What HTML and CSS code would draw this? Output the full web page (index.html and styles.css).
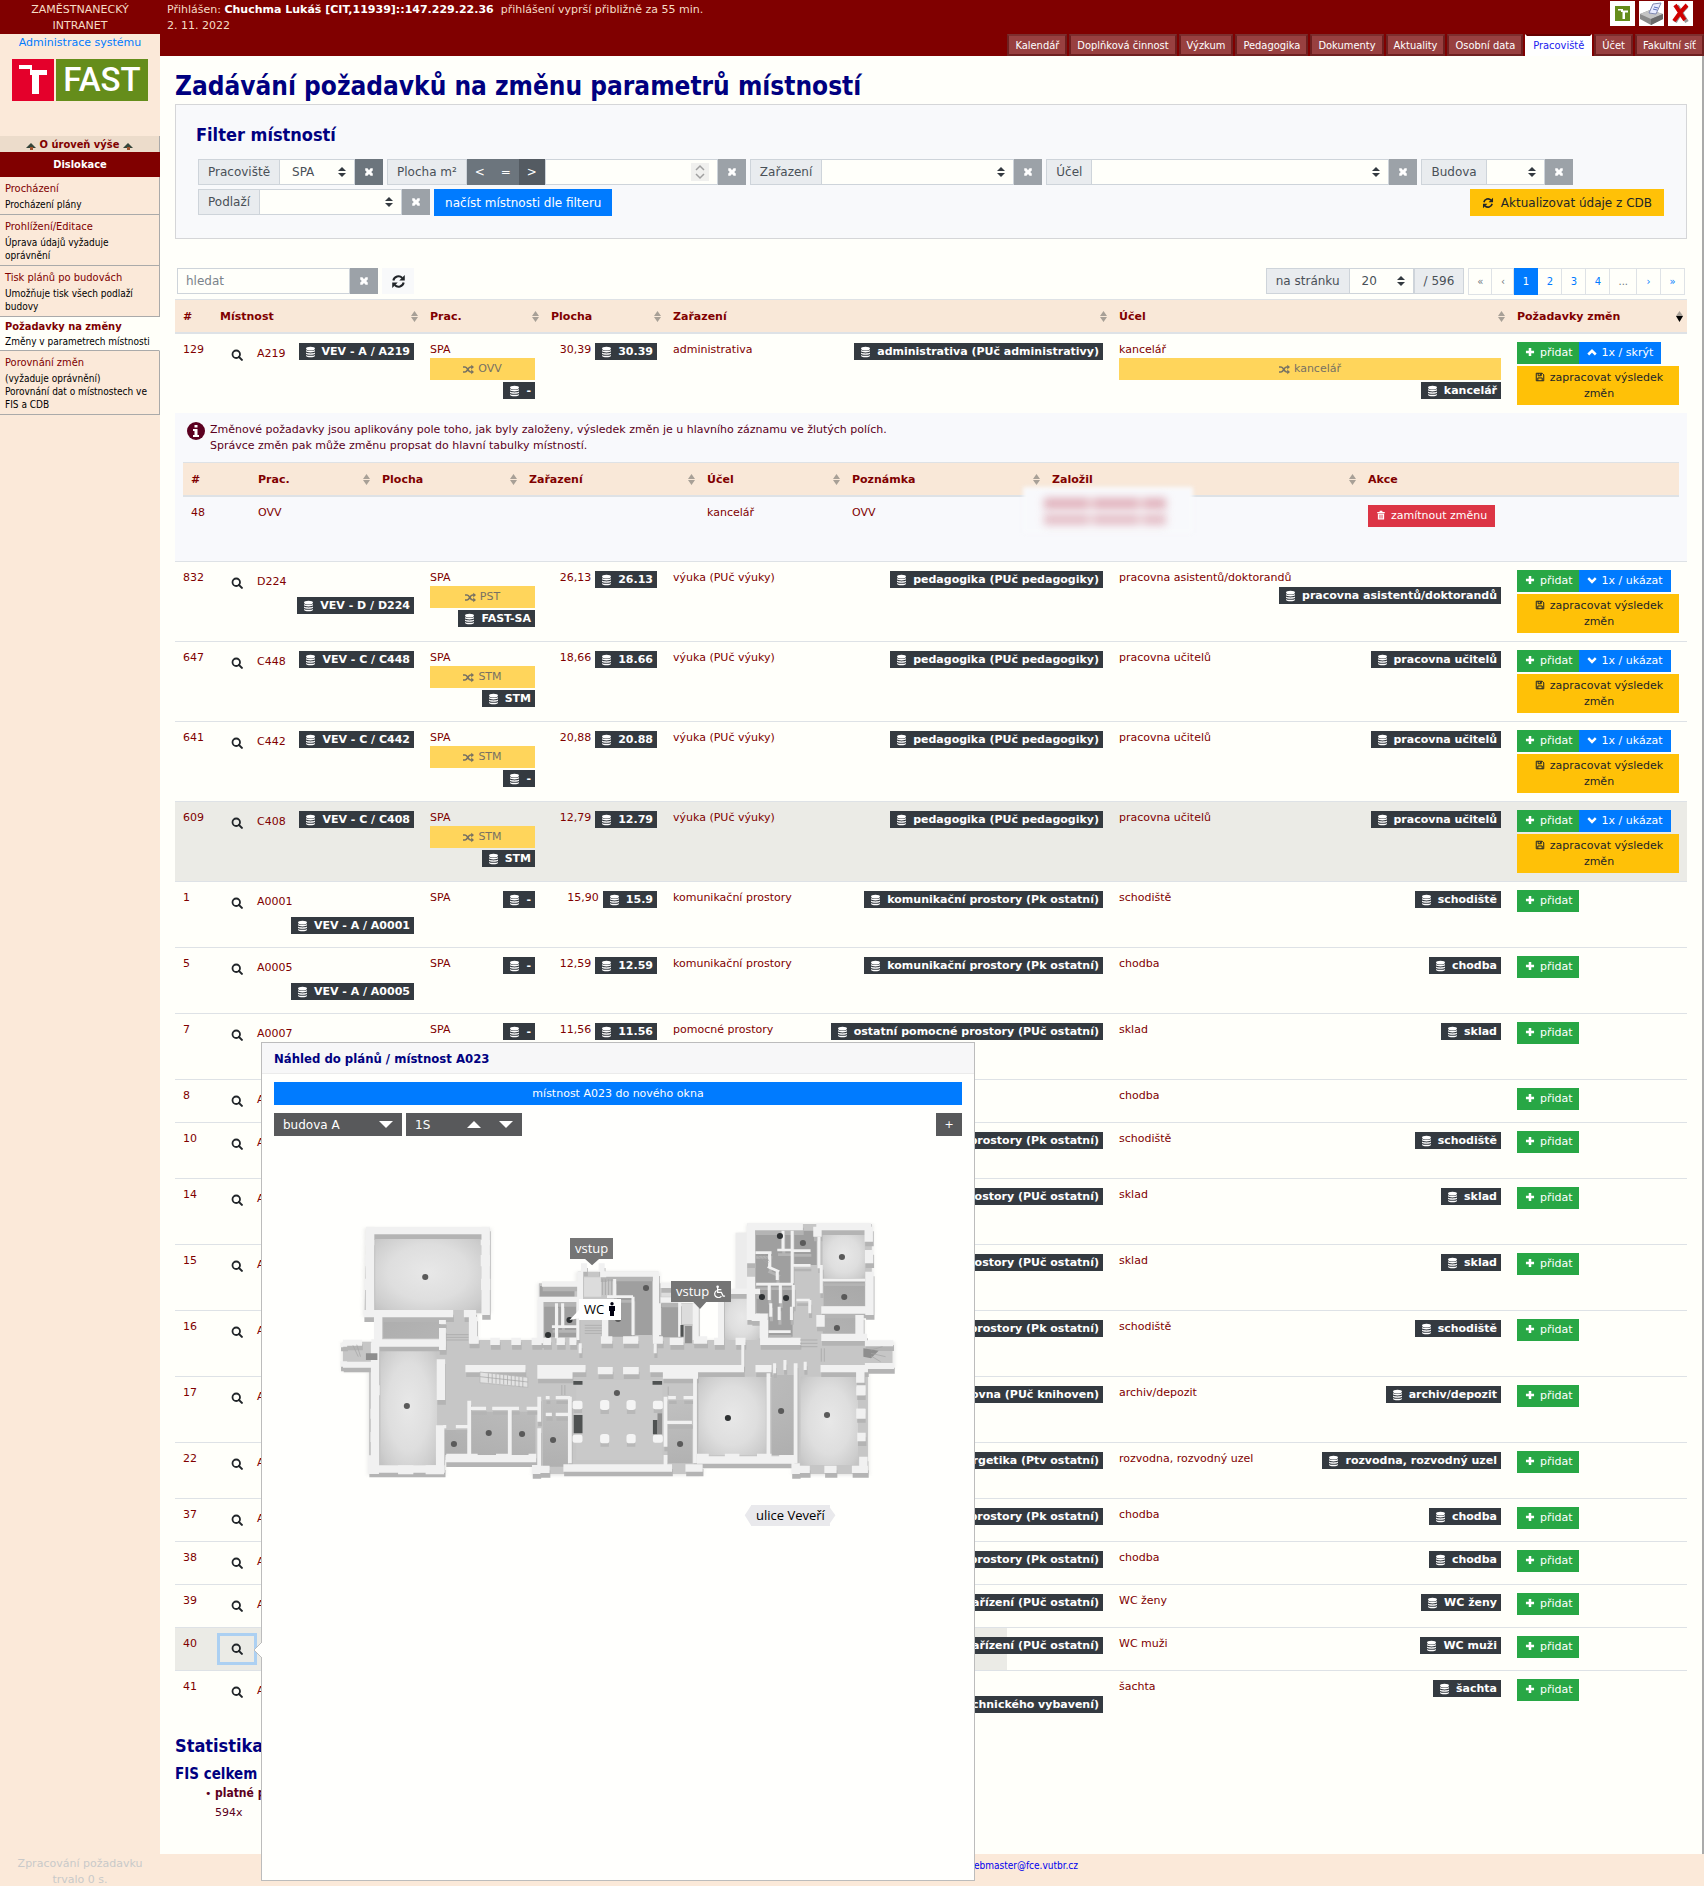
FILE: index.html
```html
<!DOCTYPE html>
<html lang="cs">
<head>
<meta charset="utf-8">
<title>Zadávání požadavků na změnu parametrů místností</title>
<link rel="stylesheet" href="styles.css">
</head>
<body>
<svg class="sprite" aria-hidden="true">
  <symbol id="i-times" viewBox="0 0 16 16"><path d="M2 2h3.500L8 5l2.500-3H14v3.500L11.500 8l2.500 2.500V14h-3.500L8 11l-2.500 3H2v-3.500L4.500 8 2 5.500z" fill="currentColor"/></symbol>
  <symbol id="i-refresh" viewBox="0 0 16 16"><path d="M2.500 7A5.600 5.600 0 0 1 12 4.200M13.500 9A5.600 5.600 0 0 1 4 11.800" fill="none" stroke="currentColor" stroke-width="2.200"/><path d="M14.700 1v6H8.800zM1.300 15V9h5.900z" fill="currentColor"/></symbol>
  <symbol id="i-search" viewBox="0 0 16 16"><circle cx="7" cy="7" r="5" fill="none" stroke="currentColor" stroke-width="2.400"/><path d="M10.500 10.500l4 4" stroke="currentColor" stroke-width="2.800" stroke-linecap="round"/></symbol>
  <symbol id="i-db" viewBox="0 0 16 16"><g fill="currentColor"><ellipse cx="8" cy="3" rx="6.500" ry="2.800"/><path d="M1.500 5.200c2 1.800 11 1.800 13 0v1.800c-1 2.200-12 2.200-13 0zM1.500 8.700c2 1.800 11 1.800 13 0v1.800c-1 2.200-12 2.200-13 0zM1.500 12.200c2 1.800 11 1.800 13 0v1.500c-1 2.600-12 2.600-13 0z"/></g></symbol>
  <symbol id="i-random" viewBox="0 0 16 16"><path d="M0 4.500h3c4 0 4 7 8 7h2M0 11.500h3c4 0 4-7 8-7h2" fill="none" stroke="currentColor" stroke-width="2.200"/><path d="M12 1l4 3.500-4 3.500zM12 8l4 3.500-4 3.500z" fill="currentColor"/></symbol>
  <symbol id="i-plus" viewBox="0 0 16 16"><path d="M6 1.500h4V6h4.500v4H10v4.500H6V10H1.500V6H6z" fill="currentColor"/></symbol>
  <symbol id="i-up" viewBox="0 0 16 16"><path d="M2 12l6-6 6 6" fill="none" stroke="currentColor" stroke-width="4"/></symbol>
  <symbol id="i-down" viewBox="0 0 16 16"><path d="M2 5l6 6 6-6" fill="none" stroke="currentColor" stroke-width="4"/></symbol>
  <symbol id="i-save" viewBox="0 0 16 16"><path d="M2 2h9.500L14 4.500V14H2zM4.500 14V9.500h7V14M5 2v4h5V2M8.500 3v2" fill="none" stroke="currentColor" stroke-width="1.600"/></symbol>
  <symbol id="i-trash" viewBox="0 0 16 16"><path d="M2 3h3.500L6 1h4l.5 2H14v2H2zM3 6h10v9H3z" fill="currentColor"/><path d="M6 7.500v6M8 7.500v6M10 7.500v6" stroke="#dc3545" stroke-width="1"/></symbol>
  <symbol id="i-info" viewBox="0 0 18 18"><circle cx="9" cy="9" r="9" fill="currentColor"/><path d="M7.500 3h3v2.600h-3zM6 7h4.500v6H12v2H6v-2h1.500V9H6z" fill="#fff"/></symbol>
  <symbol id="i-sort" viewBox="0 0 7 11"><path d="M3.500 0L7 5H0zM3.500 11L7 6H0z" fill="#a8a097"/></symbol>
  <symbol id="i-sort-desc" viewBox="0 0 7 11"><path d="M3.500 0L7 5H0z" fill="#a8a097"/><path d="M3.500 11L7 5H0z" fill="#000"/></symbol>
  <symbol id="i-tree" viewBox="0 0 10 8"><path d="M5 1l5 5H0z" fill="#34453a"/><path d="M4 5h3v3H4z" fill="#a0522d"/></symbol>
</svg>

<div class="page">
  <aside class="side">
    <div class="side-head">ZAMĚSTNANECKÝ<br>INTRANET</div>
    <a class="side-admin" href="#">Administrace systému</a>
    <a class="logo" href="#" aria-label="FAST">
      <svg class="logo-t" viewBox="0 0 42 42"><path fill="#e4002b" d="M0 0h42v42H0z"/><path fill="#fff" d="M7 6h13v4H7zM20 11h15v5h-8v19h-7V16h-2v-6h2z"/></svg>
      <span class="logo-text">FAST</span>
    </a>
    <nav class="menu">
      <a class="menu-up" href="#"><svg class="tree"><use href="#i-tree"/></svg> O úroveň výše <svg class="tree"><use href="#i-tree"/></svg></a>
      <div class="menu-title">Dislokace</div>
      <a class="item" href="#"><span class="item-name">Procházení</span><span class="item-desc">Procházení plány</span></a>
      <a class="item" href="#"><span class="item-name">Prohlížení/Editace</span><span class="item-desc">Úprava údajů vyžaduje<br>oprávnění</span></a>
      <a class="item" href="#"><span class="item-name">Tisk plánů po budovách</span><span class="item-desc">Umožňuje tisk všech podlaží budovy</span></a>
      <a class="item item-on" href="#"><span class="item-name">Požadavky na změny</span><span class="item-desc">Změny v parametrech místnosti</span></a>
      <a class="item" href="#"><span class="item-name">Porovnání změn</span><span class="item-desc">(vyžaduje oprávnění)<br>Porovnání dat o místnostech ve FIS a CDB</span></a>
    </nav>
    <div class="side-foot">Zpracování požadavku trvalo 0 s.</div>
  </aside>

  <div class="col">
    <header class="top">
      <div class="top-row">
        <div>Přihlášen: <b>Chuchma Lukáš [CIT,11939]::147.229.22.36</b>&nbsp; přihlášení vyprší přibližně za 55 min.<br>2. 11. 2022</div>
        <div class="tools">
          <a href="#" class="tool" aria-label="Intranet"><svg viewBox="0 0 25 25"><path fill="#658d1b" d="M5 5h15v15H5z"/><path fill="#fff" d="M8 8h5v1.500h5v2h-3V18h-2.500v-7H11V9.500H8z"/></svg></a>
          <a href="#" class="tool" aria-label="Tisk"><svg viewBox="0 0 25 25"><path fill="#8a8a8a" d="M1 13l10-4 13 4v5l-12 6L1 18z"/><path fill="#c4c4c4" d="M1 13l10-4 13 4-12 5z"/><path fill="#e8ecff" stroke="#8088b0" d="M10 12l4-9 8-1-5 11z"/><path stroke="#5870c0" d="M15 6l4 1M14 8l4 1"/><path fill="#6a6a6a" d="M12 18l12-5v5l-12 6z"/></svg></a>
          <a href="#" class="tool" aria-label="Odhlásit"><svg viewBox="0 0 25 25"><path d="M9 5c3 4 6 10 10 16M19 5C15 9 10 15 7 21" fill="none" stroke="#999" stroke-width="4"/><path d="M7 4c3 4 6 10 10 15M19 4C14 9 10 14 6 20" fill="none" stroke="#d00000" stroke-width="4"/></svg></a>
        </div>
      </div>
      <nav class="tabs">
        <a class="tab" href="#">Kalendář</a><a class="tab" href="#">Doplňková činnost</a><a class="tab" href="#">Výzkum</a><a class="tab" href="#">Pedagogika</a><a class="tab" href="#">Dokumenty</a><a class="tab" href="#">Aktuality</a><a class="tab" href="#">Osobní data</a><a class="tab tab-on" href="#">Pracoviště</a><a class="tab" href="#">Účet</a><a class="tab" href="#">Fakultní síť</a>
      </nav>
    </header>

    <main class="main">
      <h1>Zadávání požadavků na změnu parametrů místností</h1>

      <section class="card">
        <h2 class="card-title">Filter místností</h2>
        <form class="filters">
          <div class="group"><label class="addon" for="f1">Pracoviště</label><select class="sel w-75" id="f1"><option>SPA</option></select><button type="button" class="clr clr-on" aria-label="Zrušit"><svg><use href="#i-times"/></svg></button></div>
          <div class="group"><label class="addon" for="f2">Plocha m²</label><button type="button" class="op">&lt;</button><button type="button" class="op">=</button><button type="button" class="op op-on">&gt;</button><span class="num"><input id="f2" type="number" class="inp"><svg class="spin" viewBox="0 0 18 18"><path d="M5 7l4-4 4 4M5 11l4 4 4-4" fill="none" stroke="#a0a0a0" stroke-width="1.500"/></svg></span><button type="button" class="clr" aria-label="Zrušit"><svg><use href="#i-times"/></svg></button></div>
          <div class="group"><label class="addon" for="f3">Zařazení</label><select class="sel w-192" id="f3"><option></option></select><button type="button" class="clr" aria-label="Zrušit"><svg><use href="#i-times"/></svg></button></div>
          <div class="group"><label class="addon" for="f4">Účel</label><select class="sel w-297" id="f4"><option></option></select><button type="button" class="clr" aria-label="Zrušit"><svg><use href="#i-times"/></svg></button></div>
          <div class="group"><label class="addon" for="f5">Budova</label><select class="sel w-58" id="f5"><option></option></select><button type="button" class="clr" aria-label="Zrušit"><svg><use href="#i-times"/></svg></button></div>
          <div class="group"><label class="addon" for="f6">Podlaží</label><select class="sel w-142" id="f6"><option></option></select><button type="button" class="clr" aria-label="Zrušit"><svg><use href="#i-times"/></svg></button></div>
          <button type="button" class="btn btn-load">načíst místnosti dle filteru</button>
          <button type="button" class="btn btn-cdb"><svg><use href="#i-refresh"/></svg>Aktualizovat údaje z CDB</button>
        </form>
      </section>

      <div class="bar">
        <div class="group"><input class="inp search" type="text" placeholder="hledat" aria-label="hledat"><button type="button" class="clr" aria-label="Zrušit"><svg><use href="#i-times"/></svg></button></div>
        <button type="button" class="reload" aria-label="Obnovit"><svg><use href="#i-refresh"/></svg></button>
        <div class="group per"><label class="addon" for="per">na stránku</label><select class="sel w-64" id="per"><option>20</option></select><span class="addon">/ 596</span></div>
        <nav class="pager"><a class="off" href="#">«</a><a class="off" href="#">‹</a><a class="on" href="#">1</a><a href="#">2</a><a href="#">3</a><a href="#">4</a><a class="off" href="#">...</a><a href="#">›</a><a href="#">»</a></nav>
      </div>

      <table class="grid">
        <colgroup><col class="c-id"><col class="c-room"><col class="c-dept"><col class="c-area"><col><col class="c-use"><col class="c-act"></colgroup>
        <thead><tr>
          <th>#</th>
          <th><span class="th">Místnost<svg class="sort"><use href="#i-sort"/></svg></span></th>
          <th><span class="th">Prac.<svg class="sort"><use href="#i-sort"/></svg></span></th>
          <th><span class="th">Plocha<svg class="sort"><use href="#i-sort"/></svg></span></th>
          <th><span class="th">Zařazení<svg class="sort"><use href="#i-sort"/></svg></span></th>
          <th><span class="th">Účel<svg class="sort"><use href="#i-sort"/></svg></span></th>
          <th><span class="th">Požadavky změn<svg class="sort"><use href="#i-sort-desc"/></svg></span></th>
        </tr></thead>
        <tbody>
        <tr>
          <td>129</td>
          <td><div class="room"><button class="look" aria-label="Náhled"><svg><use href="#i-search"/></svg></button><span class="name">A219</span><span class="tag"><svg><use href="#i-db"/></svg>VEV - A / A219</span></div></td>
          <td><div class="pair">SPA<span class="chg"><svg><use href="#i-random"/></svg>OVV</span><span class="tag"><svg><use href="#i-db"/></svg>-</span></div></td>
          <td><div class="area">30,39<span class="tag"><svg><use href="#i-db"/></svg>30.39</span></div></td>
          <td><div class="pair">administrativa<span class="tag"><svg><use href="#i-db"/></svg>administrativa (PUč administrativy)</span></div></td>
          <td><div class="pair">kancelář<span class="chg"><svg><use href="#i-random"/></svg>kancelář</span><span class="tag"><svg><use href="#i-db"/></svg>kancelář</span></div></td>
          <td><div class="acts"><button class="act add"><svg><use href="#i-plus"/></svg>přidat</button><button class="act show"><svg><use href="#i-up"/></svg>1x / skrýt</button><button class="act apply"><svg><use href="#i-save"/></svg>zapracovat výsledek změn</button></div></td>
        </tr>
        <tr class="detail"><td colspan="7">
          <div class="note"><svg><use href="#i-info"/></svg><p>Změnové požadavky jsou aplikovány pole toho, jak byly založeny, výsledek změn je u hlavního záznamu ve žlutých polích.<br>Správce změn pak může změnu propsat do hlavní tabulky místností.</p></div>
          <table class="grid inner">
            <colgroup><col class="n-id"><col class="n-dept"><col class="n-area"><col class="n-cls"><col class="n-use"><col class="n-note"><col class="n-by"><col></colgroup>
            <thead><tr>
              <th>#</th>
              <th><span class="th">Prac.<svg class="sort"><use href="#i-sort"/></svg></span></th>
              <th><span class="th">Plocha<svg class="sort"><use href="#i-sort"/></svg></span></th>
              <th><span class="th">Zařazení<svg class="sort"><use href="#i-sort"/></svg></span></th>
              <th><span class="th">Účel<svg class="sort"><use href="#i-sort"/></svg></span></th>
              <th><span class="th">Poznámka<svg class="sort"><use href="#i-sort"/></svg></span></th>
              <th><span class="th">Založil<svg class="sort"><use href="#i-sort"/></svg></span></th>
              <th>Akce</th>
            </tr></thead>
            <tbody><tr><td>48</td><td>OVV</td><td></td><td></td><td>kancelář</td><td>OVV</td><td><div class="redact"><i></i><i></i></div></td><td><button class="act reject"><svg><use href="#i-trash"/></svg>zamítnout změnu</button></td></tr></tbody>
          </table>
        </td></tr>
        <tr>
          <td>832</td>
          <td><div class="room"><button class="look" aria-label="Náhled"><svg><use href="#i-search"/></svg></button><span class="name">D224</span><span class="tag brk"><svg><use href="#i-db"/></svg>VEV - D / D224</span></div></td>
          <td><div class="pair">SPA<span class="chg"><svg><use href="#i-random"/></svg>PST</span><span class="tag"><svg><use href="#i-db"/></svg>FAST-SA</span></div></td>
          <td><div class="area">26,13<span class="tag"><svg><use href="#i-db"/></svg>26.13</span></div></td>
          <td><div class="pair">výuka (PUč výuky)<span class="tag"><svg><use href="#i-db"/></svg>pedagogika (PUč pedagogiky)</span></div></td>
          <td><div class="pair">pracovna asistentů/doktorandů<span class="tag"><svg><use href="#i-db"/></svg>pracovna asistentů/doktorandů</span></div></td>
          <td><div class="acts"><button class="act add"><svg><use href="#i-plus"/></svg>přidat</button><button class="act show"><svg><use href="#i-down"/></svg>1x / ukázat</button><button class="act apply"><svg><use href="#i-save"/></svg>zapracovat výsledek změn</button></div></td>
        </tr>
        <tr>
          <td>647</td>
          <td><div class="room"><button class="look" aria-label="Náhled"><svg><use href="#i-search"/></svg></button><span class="name">C448</span><span class="tag"><svg><use href="#i-db"/></svg>VEV - C / C448</span></div></td>
          <td><div class="pair">SPA<span class="chg"><svg><use href="#i-random"/></svg>STM</span><span class="tag"><svg><use href="#i-db"/></svg>STM</span></div></td>
          <td><div class="area">18,66<span class="tag"><svg><use href="#i-db"/></svg>18.66</span></div></td>
          <td><div class="pair">výuka (PUč výuky)<span class="tag"><svg><use href="#i-db"/></svg>pedagogika (PUč pedagogiky)</span></div></td>
          <td><div class="pair">pracovna učitelů<span class="tag"><svg><use href="#i-db"/></svg>pracovna učitelů</span></div></td>
          <td><div class="acts"><button class="act add"><svg><use href="#i-plus"/></svg>přidat</button><button class="act show"><svg><use href="#i-down"/></svg>1x / ukázat</button><button class="act apply"><svg><use href="#i-save"/></svg>zapracovat výsledek změn</button></div></td>
        </tr>
        <tr>
          <td>641</td>
          <td><div class="room"><button class="look" aria-label="Náhled"><svg><use href="#i-search"/></svg></button><span class="name">C442</span><span class="tag"><svg><use href="#i-db"/></svg>VEV - C / C442</span></div></td>
          <td><div class="pair">SPA<span class="chg"><svg><use href="#i-random"/></svg>STM</span><span class="tag"><svg><use href="#i-db"/></svg>-</span></div></td>
          <td><div class="area">20,88<span class="tag"><svg><use href="#i-db"/></svg>20.88</span></div></td>
          <td><div class="pair">výuka (PUč výuky)<span class="tag"><svg><use href="#i-db"/></svg>pedagogika (PUč pedagogiky)</span></div></td>
          <td><div class="pair">pracovna učitelů<span class="tag"><svg><use href="#i-db"/></svg>pracovna učitelů</span></div></td>
          <td><div class="acts"><button class="act add"><svg><use href="#i-plus"/></svg>přidat</button><button class="act show"><svg><use href="#i-down"/></svg>1x / ukázat</button><button class="act apply"><svg><use href="#i-save"/></svg>zapracovat výsledek změn</button></div></td>
        </tr>
        <tr class="shade">
          <td>609</td>
          <td><div class="room"><button class="look" aria-label="Náhled"><svg><use href="#i-search"/></svg></button><span class="name">C408</span><span class="tag"><svg><use href="#i-db"/></svg>VEV - C / C408</span></div></td>
          <td><div class="pair">SPA<span class="chg"><svg><use href="#i-random"/></svg>STM</span><span class="tag"><svg><use href="#i-db"/></svg>STM</span></div></td>
          <td><div class="area">12,79<span class="tag"><svg><use href="#i-db"/></svg>12.79</span></div></td>
          <td><div class="pair">výuka (PUč výuky)<span class="tag"><svg><use href="#i-db"/></svg>pedagogika (PUč pedagogiky)</span></div></td>
          <td><div class="pair">pracovna učitelů<span class="tag"><svg><use href="#i-db"/></svg>pracovna učitelů</span></div></td>
          <td><div class="acts"><button class="act add"><svg><use href="#i-plus"/></svg>přidat</button><button class="act show"><svg><use href="#i-down"/></svg>1x / ukázat</button><button class="act apply"><svg><use href="#i-save"/></svg>zapracovat výsledek změn</button></div></td>
        </tr>
        <tr class="lg">
          <td>1</td>
          <td><div class="room"><button class="look" aria-label="Náhled"><svg><use href="#i-search"/></svg></button><span class="name">A0001</span><span class="tag brk"><svg><use href="#i-db"/></svg>VEV - A / A0001</span></div></td>
          <td><div class="pair">SPA<span class="tag"><svg><use href="#i-db"/></svg>-</span></div></td>
          <td><div class="area">15,90<span class="tag"><svg><use href="#i-db"/></svg>15.9</span></div></td>
          <td><div class="pair">komunikační prostory<span class="tag"><svg><use href="#i-db"/></svg>komunikační prostory (Pk ostatní)</span></div></td>
          <td><div class="pair">schodiště<span class="tag"><svg><use href="#i-db"/></svg>schodiště</span></div></td>
          <td><div class="acts"><button class="act add"><svg><use href="#i-plus"/></svg>přidat</button></div></td>
        </tr>
        <tr class="lg">
          <td>5</td>
          <td><div class="room"><button class="look" aria-label="Náhled"><svg><use href="#i-search"/></svg></button><span class="name">A0005</span><span class="tag brk"><svg><use href="#i-db"/></svg>VEV - A / A0005</span></div></td>
          <td><div class="pair">SPA<span class="tag"><svg><use href="#i-db"/></svg>-</span></div></td>
          <td><div class="area">12,59<span class="tag"><svg><use href="#i-db"/></svg>12.59</span></div></td>
          <td><div class="pair">komunikační prostory<span class="tag"><svg><use href="#i-db"/></svg>komunikační prostory (Pk ostatní)</span></div></td>
          <td><div class="pair">chodba<span class="tag"><svg><use href="#i-db"/></svg>chodba</span></div></td>
          <td><div class="acts"><button class="act add"><svg><use href="#i-plus"/></svg>přidat</button></div></td>
        </tr>
        <tr class="lg">
          <td>7</td>
          <td><div class="room"><button class="look" aria-label="Náhled"><svg><use href="#i-search"/></svg></button><span class="name">A0007</span></div></td>
          <td><div class="pair">SPA<span class="tag"><svg><use href="#i-db"/></svg>-</span></div></td>
          <td><div class="area">11,56<span class="tag"><svg><use href="#i-db"/></svg>11.56</span></div></td>
          <td><div class="pair">pomocné prostory<span class="tag"><svg><use href="#i-db"/></svg>ostatní pomocné prostory (PUč ostatní)</span></div></td>
          <td><div class="pair">sklad<span class="tag"><svg><use href="#i-db"/></svg>sklad</span></div></td>
          <td><div class="acts"><button class="act add"><svg><use href="#i-plus"/></svg>přidat</button></div></td>
        </tr>
        <tr>
          <td>8</td>
          <td><div class="room"><button class="look" aria-label="Náhled"><svg><use href="#i-search"/></svg></button><span class="name">A</span></div></td>
          <td></td><td></td><td></td>
          <td>chodba</td>
          <td><div class="acts"><button class="act add"><svg><use href="#i-plus"/></svg>přidat</button></div></td>
        </tr>
        <tr class="md">
          <td>10</td>
          <td><div class="room"><button class="look" aria-label="Náhled"><svg><use href="#i-search"/></svg></button><span class="name">A</span></div></td>
          <td></td><td></td>
          <td><div class="pair"><span class="tag">prostory (Pk ostatní)</span></div></td>
          <td><div class="pair">schodiště<span class="tag"><svg><use href="#i-db"/></svg>schodiště</span></div></td>
          <td><div class="acts"><button class="act add"><svg><use href="#i-plus"/></svg>přidat</button></div></td>
        </tr>
        <tr class="lg">
          <td>14</td>
          <td><div class="room"><button class="look" aria-label="Náhled"><svg><use href="#i-search"/></svg></button><span class="name">A</span></div></td>
          <td></td><td></td>
          <td><div class="pair"><span class="tag">prostory (PUč ostatní)</span></div></td>
          <td><div class="pair">sklad<span class="tag"><svg><use href="#i-db"/></svg>sklad</span></div></td>
          <td><div class="acts"><button class="act add"><svg><use href="#i-plus"/></svg>přidat</button></div></td>
        </tr>
        <tr class="lg">
          <td>15</td>
          <td><div class="room"><button class="look" aria-label="Náhled"><svg><use href="#i-search"/></svg></button><span class="name">A</span></div></td>
          <td></td><td></td>
          <td><div class="pair"><span class="tag">prostory (PUč ostatní)</span></div></td>
          <td><div class="pair">sklad<span class="tag"><svg><use href="#i-db"/></svg>sklad</span></div></td>
          <td><div class="acts"><button class="act add"><svg><use href="#i-plus"/></svg>přidat</button></div></td>
        </tr>
        <tr class="lg">
          <td>16</td>
          <td><div class="room"><button class="look" aria-label="Náhled"><svg><use href="#i-search"/></svg></button><span class="name">A</span></div></td>
          <td></td><td></td>
          <td><div class="pair"><span class="tag">prostory (Pk ostatní)</span></div></td>
          <td><div class="pair">schodiště<span class="tag"><svg><use href="#i-db"/></svg>schodiště</span></div></td>
          <td><div class="acts"><button class="act add"><svg><use href="#i-plus"/></svg>přidat</button></div></td>
        </tr>
        <tr class="lg">
          <td>17</td>
          <td><div class="room"><button class="look" aria-label="Náhled"><svg><use href="#i-search"/></svg></button><span class="name">A</span></div></td>
          <td></td><td></td>
          <td><div class="pair"><span class="tag">knihovna (PUč knihoven)</span></div></td>
          <td><div class="pair">archiv/depozit<span class="tag"><svg><use href="#i-db"/></svg>archiv/depozit</span></div></td>
          <td><div class="acts"><button class="act add"><svg><use href="#i-plus"/></svg>přidat</button></div></td>
        </tr>
        <tr class="md">
          <td>22</td>
          <td><div class="room"><button class="look" aria-label="Náhled"><svg><use href="#i-search"/></svg></button><span class="name">A</span></div></td>
          <td></td><td></td>
          <td><div class="pair"><span class="tag">energetika (Ptv ostatní)</span></div></td>
          <td><div class="pair">rozvodna, rozvodný uzel<span class="tag"><svg><use href="#i-db"/></svg>rozvodna, rozvodný uzel</span></div></td>
          <td><div class="acts"><button class="act add"><svg><use href="#i-plus"/></svg>přidat</button></div></td>
        </tr>
        <tr>
          <td>37</td>
          <td><div class="room"><button class="look" aria-label="Náhled"><svg><use href="#i-search"/></svg></button><span class="name">A</span></div></td>
          <td></td><td></td>
          <td><div class="pair"><span class="tag">prostory (Pk ostatní)</span></div></td>
          <td><div class="pair">chodba<span class="tag"><svg><use href="#i-db"/></svg>chodba</span></div></td>
          <td><div class="acts"><button class="act add"><svg><use href="#i-plus"/></svg>přidat</button></div></td>
        </tr>
        <tr>
          <td>38</td>
          <td><div class="room"><button class="look" aria-label="Náhled"><svg><use href="#i-search"/></svg></button><span class="name">A</span></div></td>
          <td></td><td></td>
          <td><div class="pair"><span class="tag">prostory (Pk ostatní)</span></div></td>
          <td><div class="pair">chodba<span class="tag"><svg><use href="#i-db"/></svg>chodba</span></div></td>
          <td><div class="acts"><button class="act add"><svg><use href="#i-plus"/></svg>přidat</button></div></td>
        </tr>
        <tr>
          <td>39</td>
          <td><div class="room"><button class="look" aria-label="Náhled"><svg><use href="#i-search"/></svg></button><span class="name">A</span></div></td>
          <td></td><td></td>
          <td><div class="pair"><span class="tag">zařízení (PUč ostatní)</span></div></td>
          <td><div class="pair">WC ženy<span class="tag"><svg><use href="#i-db"/></svg>WC ženy</span></div></td>
          <td><div class="acts"><button class="act add"><svg><use href="#i-plus"/></svg>přidat</button></div></td>
        </tr>
        <tr class="part">
          <td>40</td>
          <td><div class="room"><button class="look look-on" aria-label="Náhled"><svg><use href="#i-search"/></svg></button></div></td>
          <td></td><td></td>
          <td><div class="pair"><span class="tag">zařízení (PUč ostatní)</span></div></td>
          <td><div class="pair">WC muži<span class="tag"><svg><use href="#i-db"/></svg>WC muži</span></div></td>
          <td><div class="acts"><button class="act add"><svg><use href="#i-plus"/></svg>přidat</button></div></td>
        </tr>
        <tr>
          <td>41</td>
          <td><div class="room"><button class="look" aria-label="Náhled"><svg><use href="#i-search"/></svg></button><span class="name">A</span></div></td>
          <td></td><td></td>
          <td><div class="pair second"><span class="tag">technického vybavení)</span></div></td>
          <td><div class="pair">šachta<span class="tag"><svg><use href="#i-db"/></svg>šachta</span></div></td>
          <td><div class="acts"><button class="act add"><svg><use href="#i-plus"/></svg>přidat</button></div></td>
        </tr>
        </tbody>
      </table>

      <section class="stats">
        <h2>Statistika</h2>
        <h3>FIS celkem</h3>
        <ul><li><b>platné p</b><br>594x</li></ul>
      </section>
    </main>
    <footer class="foot"><a href="#">webmaster@fce.vutbr.cz</a></footer>
  </div>

  <div class="pop" role="dialog" aria-label="Náhled do plánů">
    <svg class="pop-arrow" viewBox="0 0 9 16"><path d="M9 0L1 8l8 8" fill="#fffffd" stroke="#bcbcbc"/></svg>
    <h3 class="pop-title">Náhled do plánů / místnost A023</h3>
    <div class="pop-body">
      <button class="pop-open">místnost A023 do nového okna</button>
      <div class="pop-bar">
        <select class="dark w-128" aria-label="budova"><option>budova A</option></select>
        <div class="floor"><select class="dark w-116" aria-label="podlaží"><option>1S</option></select><button class="floor-up" aria-label="nahoru"></button></div>
        <button class="zoom">+</button>
      </div>
      <div class="map">
        <svg class="plan" viewBox="0 0 1568 1020" preserveAspectRatio="none" aria-hidden="true">
          <defs>
            <radialGradient id="g1" r=".75"><stop offset="0" stop-color="#e8e8e8"/><stop offset=".5" stop-color="#dedede"/><stop offset=".8" stop-color="#cdcdcd"/><stop offset="1" stop-color="#bdbdbd"/></radialGradient>
            <radialGradient id="g2" r=".75"><stop offset="0" stop-color="#c8c8c8"/><stop offset="1" stop-color="#a6a6a6"/></radialGradient>
            <filter id="soft" x="-5%" y="-5%" width="110%" height="110%"><feGaussianBlur stdDeviation="5"/></filter>
            <g id="walls">
              <path stroke-width="22" d="M130 92H436M131 80V345M433 80V345M114 341H348M376 341H408M152 352V420M400 350V430M134 429H328M144 429V810M127 807H326M314 676V807M316 478V600"/>
              <path stroke-width="18" d="M320 360V372M320 384V450M60 428H110M60 494H150M1424 430H1498M1424 498H1500M62 428V440M62 484V500"/>
              <path stroke-width="22" d="M390 420H415M445 424H470M500 424H525M553 424H579M583 424H604M618 424H640M652 424H670M734 420H764M792 420H832M870 420H896M914 424H950M976 420H1012M1030 424H1056M1086 424H1112M1150 424H1256M380 506H537M568 506H694M568 525H660M726 512H765M792 512H833M862 506H1108M896 525H988M1138 506H1180M1308 506H1432"/>
              <path stroke-width="10" d="M390 602V770M390 625H434M450 625H520M540 625H570M496 630V770M322 680H330M355 680H385M573 590V665M573 685V800M590 593H600M616 593H654M590 643H606M616 643H650M653 590V790M903 590V740M903 765V800M910 593H930M950 593H975M908 667H972M980 530V790M1172 520V770M1243 490V790"/>
              <path stroke-width="22" d="M330 772H388M388 772H412M460 772H496M545 772H565M565 795V822M565 808H600M636 804H920M955 804H1000M985 772H1016M1058 772H1096M1142 772H1180M1200 776H1243M1243 790V822M1240 808H1280M1318 808H1350M1390 808H1432M1412 510V548M1413 560V586M1413 626V654M1415 698V724M1420 770V812M328 776H565M985 780H1240"/>
              <path stroke-width="16" d="M580 252H672M680 215V300M570 298H672M576 300V430M740 215V232M740 222H886M878 215V420M690 190V215M736 190V215M745 300V415M890 300H940M890 256H920M982 310V420M1048 270V420M1048 274H1150"/>
              <path stroke-width="8" d="M618 310V415M634 310V380M606 380H670M674 300V420M750 290H818M818 290V405M770 237V290M940 305V410M887 310V405"/>
              <path stroke-width="22" d="M1116 80H1262M1297 80H1440M1126 80V190M1126 230V360M1128 352H1170M1300 80V110M1434 80V125M1435 150V190M1436 215V345M1310 330H1445M1308 345V380M1310 412H1430M1410 345V410M1160 360V415"/>
              <path stroke-width="8" d="M1138 158H1180M1175 160V200M1195 150H1230M1210 92V150M1234 92V250M1236 152H1282M1236 196H1282M1140 252H1236M1174 255V300M1203 255V310M1237 255V320M1310 240H1425M1310 195V280M1304 110V205M1178 310V350M1200 320V360M1232 320V360M1245 300H1280M1280 300V340M1172 395H1230M1105 430V500M1215 480V510M1268 485V510M680 430V460M876 430V460M1188 490V520M1170 200L1200 215M1195 215V240"/>
            </g>
          </defs>
          <path fill="#999" opacity=".25" filter="url(#soft)" d="M118 84H446V340H410V420H570V250H670V215H886V250H940V310H985V420H1048V270H1088V100H1116V72H1444V345H1420V425H1500V508H1434V826H1236V786H1000V826H556V786H326V826H126V515H58V425H150V350H114z"/>
          <path fill="#ececec" d="M1086 98H1118V270H1086z"/>
          <path fill="#c6c6c6" d="M122 84H444V340H406V420H572V250H674V215H884V250H940V310H985V420H1050V274H1116V72H1442V345H1416V425H1496V505H1432V822H1238V780H1000V822H558V780H324V822H128V510H60V425H146V350H116z"/>
          <path fill="url(#g1)" d="M143 105H422V330H143z"/>
          <path fill="url(#g1)" d="M158 445H306V795H158z"/>
          <path fill="url(#g1)" d="M990 530H1165V765H990z"/>
          <path fill="url(#g1)" d="M1256 530H1406V795H1256z"/>
          <path fill="url(#g1)" d="M1314 95H1424V235H1314z"/>
          <path fill="url(#g1)" d="M1056 284H1150V420H1056z"/>
          <path fill="#c9c9c9" d="M670 540H895V780H670z"/>
          <path fill="url(#g2)" d="M165 352H315V415H165zM325 690H385V770H325zM396 635H492V770H396zM500 635H563V770H500zM582 600H648V800H582zM908 600H972V790H908zM1180 525H1238V765H1180zM1316 245H1424V318H1316zM1314 350H1402V405H1314z"/>
          <path fill="#9f9f9f" d="M575 258H665V290H575zM583 310H670V412H583zM774 238H868V405H774zM750 298H815V410H750zM888 312H937V412H888zM1138 92H1232V250H1138zM1238 92H1298V195H1238zM1140 258H1238V340H1140zM1172 330H1235V410H1172z"/>
          <path fill="#dcdcdc" d="M690 232H735V290H690zM892 258H925V290H892zM942 312H978V372H942z"/>
          <use href="#walls" transform="translate(2 14)" fill="none" stroke="#b4b4b4"/>
          <use href="#walls" fill="none" stroke="#f1f1f1"/>
          <g fill="#f1f1f1"><path d="M118 120h24v16h-24zM118 165h22v34h-22zM116 236h24v34h-24zM420 120h24v16h-24zM420 165h24v34h-24zM421 236h24v34h-24zM134 556h22v30h-22zM132 626h22v30h-22zM132 696h22v30h-22zM126 766h28v56h-28zM204 796h40v27h-40zM276 796h48v27h-48zM1402 556h24v30h-24zM1402 626h24v30h-24z"/></g>
          <g fill="#b8b8b8"><path d="M733 628h22v14h-22zM802 628h22v14h-22zM733 728h22v12h-22zM802 728h22v12h-22zM663 625h22v14h-22zM872 625h22v14h-22z"/></g>
          <g fill="#f4f4f4"><rect x="732" y="600" width="24" height="30" rx="8"/><rect x="801" y="600" width="24" height="30" rx="8"/><rect x="732" y="702" width="24" height="28" rx="8"/><rect x="801" y="702" width="24" height="28" rx="8"/><rect x="660" y="602" width="26" height="26" rx="6"/><rect x="870" y="602" width="26" height="26" rx="6"/><rect x="660" y="704" width="26" height="24" rx="6"/><rect x="870" y="704" width="26" height="24" rx="6"/></g>
          <path fill="#4f5252" d="M663 645H686V700H663zM870 660H882V703H870zM662 543H686V554H662zM869 543H894V554H869zM942 375H950V410H942z"/>
          <path fill="#8e8e8e" d="M882 640H894V703H882zM954 378H972V430H954zM120 460H150V480H120zM1420 445L1460 452 1440 475 1420 470z"/>
          <path fill="#e2e2e2" stroke="#b5b5b5" stroke-width="2" d="M418 516L543 532V562L418 548z"/>
          <path stroke="#a6a6a6" stroke-width="2" fill="none" d="M418 530L543 546M440 520V548M450 521V550M460 522V551M470 523V552M480 524V553M490 526V554M500 527V556M510 528V558M520 530V560M530 531V561M692 376H736M692 384H736M692 392H736M692 400H736M738 238V285M746 238V285M754 238V285M762 238V285M330 404H388M330 412H388M330 420H388M632 555V585M640 555V585M910 560V585M1255 420H1300M1255 430H1300M1255 440H1300M1310 445V485M1318 445V485M1140 165L1170 190M1150 163L1172 188M1160 162L1174 184M86 436L100 470M96 434L106 470M1440 450L1470 440M1440 460L1478 470M1440 468L1465 485"/>
          <g fill="#5a5a5a"><ellipse cx="275" cy="231" rx="8" ry="9"/><ellipse cx="227" cy="618" rx="8" ry="9"/><ellipse cx="350" cy="732" rx="8" ry="9"/><ellipse cx="441" cy="699" rx="8" ry="9"/><ellipse cx="528" cy="702" rx="8" ry="9"/><ellipse cx="609" cy="720" rx="8" ry="9"/><ellipse cx="776" cy="579" rx="8" ry="9"/><ellipse cx="941" cy="732" rx="8" ry="9"/><ellipse cx="1205" cy="633" rx="8" ry="9"/><ellipse cx="1325" cy="645" rx="8" ry="9"/><ellipse cx="1364" cy="171" rx="8" ry="9"/><ellipse cx="1370" cy="291" rx="8" ry="9"/><ellipse cx="1351" cy="384" rx="8" ry="9"/><ellipse cx="1262" cy="129" rx="8" ry="9"/><ellipse cx="852" cy="264" rx="8" ry="9"/><ellipse cx="779" cy="357" rx="8" ry="9"/></g>
          <g fill="#2e3133"><ellipse cx="1066" cy="654" rx="8" ry="9"/><ellipse cx="1202" cy="108" rx="8" ry="9"/><ellipse cx="1155" cy="291" rx="8" ry="9"/><ellipse cx="1218" cy="294" rx="8" ry="9"/><ellipse cx="596" cy="405" rx="8" ry="9"/><ellipse cx="652" cy="360" rx="8" ry="9"/></g>
          <path fill="#757575" d="M692 176H730L711 196zM975 305H1010L993 327z"/>
          <path fill="#fff" d="M680 326L652 360 680 354z"/>
          <path fill="#e9e9ec" d="M1127 916L1110 946 1127 977zM1328 916L1347 946 1328 977z"/>
        </svg>
        <span class="pin pin-gray pin-a">vstup</span>
        <span class="pin pin-gray pin-b">vstup <svg class="wheel" viewBox="0 0 14 14"><path d="M5 3v5h4l2 4h2M5 5h4M4 6a4 4 0 1 0 5 6" fill="none" stroke="#fff" stroke-width="1.300"/><circle cx="5" cy="2" r="1.400" fill="#fff"/></svg></span>
        <span class="pin pin-white pin-c">WC <svg class="man" viewBox="0 0 8 14"><circle cx="4" cy="1.700" r="1.700" fill="#001"/><path d="M1 4h6v5H6v5H2V9H1z" fill="#001"/></svg></span>
        <span class="pin pin-street">ulice Veveří</span>
      </div>
    </div>
  </div>
</div>
</body>
</html>
```
FILE: styles.css
```css
* { box-sizing: border-box; }
body {
  margin: 0;
  background: #fbe9d9;
  color: #800000;
  font: 11px/16px "DejaVu Sans", sans-serif;
}
a { text-decoration: none; color: inherit; }
button, input, select { font: inherit; color: inherit; border: 0; border-radius: 0; margin: 0; padding: 0; }
h1, h2, h3, p, ul { margin: 0; padding: 0; }
.sprite { position: absolute; width: 0; height: 0; }
.page { position: relative; display: flex; min-height: 100vh; }

/* left column */
.side { width: 160px; flex: none; display: flex; flex-direction: column; text-align: center; }
.side-head { background: #800000; color: #f6ddc6; padding-top: 2px; height: 34px; }
.side-admin { color: #007bff; padding-top: 1px; height: 25px; }
.logo { display: flex; gap: 2px; height: 42px; margin-left: 12px; }
.logo-t { width: 42px; height: 42px; }
.logo-text { width: 92px; background: #658d1b; color: #fff; font: 500 33px/42px "Roboto", sans-serif; }
.menu { margin-top: 35px; font: 10px/13px "DejaVu Sans Condensed", "DejaVu Sans", sans-serif; }
.menu-up { display: block; height: 16px; background: #ecdccb; border-right: 1px solid #aaa; font-weight: bold; font-size: 11px; line-height: 18px; }
.tree { width: 10px; height: 8px; vertical-align: -2px; }
.menu-title { background: #800000; color: #fff; font-weight: bold; font-size: 11px; line-height: 25px; }
.item { display: block; text-align: left; padding: 4px 2px 3px 5px; border: solid #aaa; border-width: 0 1px 1px 0; }
.item-name { display: block; font-size: 11px; line-height: 16px; margin-bottom: 1px; }
.item-desc { display: block; color: #000; }
.item-on { background: #fffff9; border-right-color: #fffff9; padding: 2px 0 2px 5px; }
.item-on .item-name { font-weight: bold; margin: 0; }
.side-foot { margin-top: auto; padding: 0 12px; color: #c9c9c9; }

/* header */
.col { flex: 1; min-width: 0; display: flex; flex-direction: column; }
.top { background: #800000; color: #f6ddc6; height: 56px; display: flex; flex-direction: column; justify-content: space-between; }
.top b { color: #fff; }
.top-row { display: flex; justify-content: space-between; padding: 1px 11px 0 7px; height: 34px; }
.top-row > div:first-child { padding-top: 1px; }
.tools { display: flex; gap: 4px; }
.tool { width: 25px; height: 25px; background: #fff; }
.tool svg { display: block; width: 25px; height: 25px; }
.tabs { display: flex; justify-content: flex-end; gap: 2px; font: 11px/18px "DejaVu Sans Condensed", "DejaVu Sans", sans-serif; }
.tab { height: 22px; padding: 1px 6px 0; background: #984040; color: #fff; border: 2px solid #6e2020; border-top-color: #7d2e2e; }
.tab-on { background: #fff; color: #2020ee; border-color: #fff; border-top-color: #600; }

/* main */
.main { flex: 1; background: #fffffa; border-right: 2px solid #aaa; padding: 15px 15px 0; }
h1, h2, h3 { color: #000080; font-family: "DejaVu Sans Condensed", "DejaVu Sans", sans-serif; }
h1 { font-size: 26px; line-height: 30px; margin-bottom: 3px; }
.card { background: #f8f9fb; border: 1px solid #d5d6d8; padding: 18px 22px 22px; }
.card-title { font-size: 18px; line-height: 24px; margin: 0 0 12px -2px; }
.filters { display: flex; flex-wrap: wrap; gap: 4px; }
.filters, .bar { font-size: 12px; color: #495057; }
.group { display: flex; height: 26px; }
.addon { background: #e9ecef; border: 1px solid #ced4da; padding: 0 9px; line-height: 24px; }
.sel, .inp { background: #fffffa; border: 1px solid #ced4da; height: 26px; }
.sel { appearance: none; padding: 0 12px; border-left: 0; color: #495057; background: #fffffa url("data:image/svg+xml,%3Csvg xmlns='http://www.w3.org/2000/svg' viewBox='0 0 8 10'%3E%3Cpath fill='%23343a40' d='M4 0l4 4H0zM4 10l4-4H0z'/%3E%3C/svg%3E") no-repeat right 8px center / 8px 10px; }
.w-58 { width: 58px; } .w-64 { width: 64px; } .w-75 { width: 75px; } .w-142 { width: 142px; } .w-192 { width: 192px; } .w-297 { width: 297px; }
.num { position: relative; }
.num .inp { width: 173px; appearance: textfield; }
.inp::-webkit-inner-spin-button { appearance: none; }
.spin { position: absolute; right: 9px; top: 4px; width: 18px; height: 18px; background: #f0f0ee; }
.op { width: 26px; background: #6c757d; color: #fff; }
.op-on { background: #545b62; }
.clr { width: 28px; background: #9ca2a8; color: #fff; display: grid; place-items: center; }
.clr-on { background: #6c757d; }
.clr svg { width: 10px; height: 10px; }
.btn { height: 27px; padding: 0 11px; }
.btn-load { background: #007bff; color: #fff; }
.btn-cdb { background: #ffc107; color: #212529; margin-left: auto; display: flex; align-items: center; gap: 7px; padding: 0 12px; }
.btn-cdb svg { width: 12px; height: 12px; }
.bar { display: flex; gap: 4px; align-items: center; margin: 28px 2px 4px; height: 28px; }
.search { width: 173px; padding: 0 8px; }
.search::placeholder { color: #7b838a; opacity: 1; }
.reload { width: 32px; height: 26px; background: #f8f9fa; color: #212529; display: grid; place-items: center; }
.reload svg { width: 15px; height: 15px; }
.per { margin-left: auto; }
.pager { display: flex; height: 27px; font-size: 10px; line-height: 25px; color: #007bff; border-left: 1px solid #dee2e6; }
.pager a { min-width: 24px; padding: 0 8px; text-align: center; border: 1px solid #dee2e6; border-left: 0; }
.pager .off { min-width: 22px; color: #6c757d; }
.pager .on { background: #007bff; border-color: #007bff; color: #fff; }

/* tables */
.grid { width: 100%; table-layout: fixed; border-collapse: separate; border-spacing: 0; }
.c-id { width: 37px; } .c-room { width: 210px; } .c-dept { width: 121px; } .c-area { width: 122px; } .c-use { width: 398px; } .c-act { width: 178px; }
.n-id { width: 67px; } .n-dept { width: 124px; } .n-area { width: 147px; } .n-cls { width: 178px; } .n-use { width: 145px; } .n-note { width: 200px; } .n-by { width: 316px; }
.grid th { height: 35px; padding: 1px 8px 0; text-align: left; background: #f9e8d8; border: solid #dee2e6; border-width: 1px 0 2px; }
.th { display: flex; justify-content: space-between; align-items: center; margin-right: -4px; }
.sort { width: 7px; height: 11px; }
.grid td { padding: 8px; vertical-align: top; border-top: 1px solid #dee2e6; }
.grid tbody tr:first-child > td { border-top: 0; }
.md { height: 56px; }
.lg { height: 66px; }
.shade { background: #ebebe6; }
.part { background: linear-gradient(to right, #ebebe6 55%, transparent 55%); }
.room { display: flex; flex-wrap: wrap; }
.look { width: 34px; height: 26px; background: none; color: #212529; display: grid; place-items: center; }
.look svg { width: 12px; height: 12px; }
.look-on { box-shadow: 0 0 0 3px #acd0f2; }
.name { padding: 4px 0 0 3px; }
.tag { display: inline-flex; align-items: center; gap: 6px; height: 17px; margin: 1px 0 4px auto; padding: 0 4px 0 6px; background: #343a40; color: #fff; font-weight: bold; font-size: 11px; white-space: nowrap; }
.tag svg { width: 11px; height: 12px; }
.room:has(.brk)::after { content: ""; order: 1; flex-basis: 100%; }
.room .brk { order: 2; }
.pair { display: flex; flex-wrap: wrap; }
.chg { width: 100%; height: 22px; background: #ffd55b; color: #777163; display: flex; justify-content: center; align-items: center; gap: 4px; margin-bottom: 1px; }
.chg svg { width: 11px; height: 11px; }
.pair .tag { margin-bottom: 0; }
.second { padding-top: 16px; }
.area { display: flex; justify-content: flex-end; gap: 4px; }
.area .tag { margin-left: 0; }
.acts { display: flex; flex-wrap: wrap; row-gap: 2px; }
.act { height: 22px; padding: 0 6px 0 8px; color: #fff; white-space: nowrap; }
.act svg { width: 10px; height: 10px; margin-right: 5px; vertical-align: -1px; }
.add { background: #28a745; }
.show { background: #007bff; padding: 0 8px; }
.apply { width: 100%; height: 39px; background: #ffc107; color: #212529; white-space: normal; }
.reject { background: #dc3545; padding: 0 8px; }
.detail { background: #f8f9fc; }
.grid .detail > td { border-top: 0; padding: 9px 8px 26px; }
.note { display: flex; gap: 5px; color: #5b0020; margin-bottom: 8px; padding-left: 4px; }
.note svg { width: 18px; height: 18px; }
.inner td { height: 37px; }
.redact { position: relative; }
.redact::before { content: ""; position: absolute; left: -29px; top: -18px; width: 170px; height: 46px; background: #f8f9fc; filter: blur(2px); }
.redact i { position: absolute; left: -8px; top: -7px; width: 122px; height: 11px; background: repeating-linear-gradient(to right, #e0b0ba 0 42px, #edd3d8 46px 50px); filter: blur(4px); }
.redact i + i { top: 9px; opacity: .8; }

.stats { padding: 13px 0 32px; color: #5b0020; }
.stats h2 { font-size: 18px; line-height: 24px; margin-bottom: 6px; }
.stats h3 { font-size: 15px; line-height: 20px; }
.stats ul { padding-left: 40px; list-style: "• "; line-height: 19px; }
.stats b { font: bold 12px/19px "DejaVu Sans Condensed", "DejaVu Sans", sans-serif; }
.foot { height: 34px; padding: 3px 626px 0 0; text-align: right; color: #0000ee; font: 10px/18px "DejaVu Sans Condensed", "DejaVu Sans", sans-serif; }

/* plan preview popover */
.pop { position: absolute; left: 261px; top: 1042px; width: 714px; height: 839px; background: #fffffd; border: 1px solid #bcbcbc; }
.pop-arrow { position: absolute; left: -9px; top: 599px; width: 9px; height: 16px; }
.pop-title { height: 31px; padding: 0 12px; background: #f7f7f8; border-bottom: 1px solid #ebebeb; font-size: 13px; line-height: 31px; }
.pop-body { padding: 8px 12px; }
.pop-open { display: block; width: 100%; height: 23px; background: #007bff; color: #fff; }
.pop-bar { display: flex; gap: 4px; margin-top: 8px; }
.dark { appearance: none; height: 23px; padding: 0 9px; color: #fff; font-size: 12px; background: #58595b url("data:image/svg+xml,%3Csvg xmlns='http://www.w3.org/2000/svg' viewBox='0 0 14 7'%3E%3Cpath fill='%23fff' d='M0 0h14L7 7z'/%3E%3C/svg%3E") no-repeat right 9px center / 14px 7px; }
.w-128 { width: 128px; } .w-116 { width: 116px; }
.floor { position: relative; }
.floor-up { position: absolute; right: 41px; top: 8px; border: solid transparent; border-width: 0 7px 7px; border-bottom-color: #fff; background: none; }
.zoom { width: 26px; height: 23px; margin-left: auto; background: #58595b; color: #fff; }
.map { position: relative; margin: 64px 42px 0 46px; width: 600px; height: 340px; font: 13px/21px "Open Sans", "Noto Sans", sans-serif; }
.plan { display: block; width: 600px; height: 340px; }
.pin { position: absolute; height: 21px; padding: 0 5px; white-space: nowrap; }
.pin-gray { background: #757575; color: #fff; }
.pin-white { background: #fff; color: #000; }
.pin-a { left: 250px; top: 38px; }
.pin-b { left: 351px; top: 81px; }
.pin-c { left: 259px; top: 99px; }
.wheel { width: 13px; height: 13px; vertical-align: -2px; }
.man { width: 8px; height: 14px; vertical-align: -2px; }
.pin-street { left: 431px; top: 305px; background: #e9e9ec; color: #000; }
```
